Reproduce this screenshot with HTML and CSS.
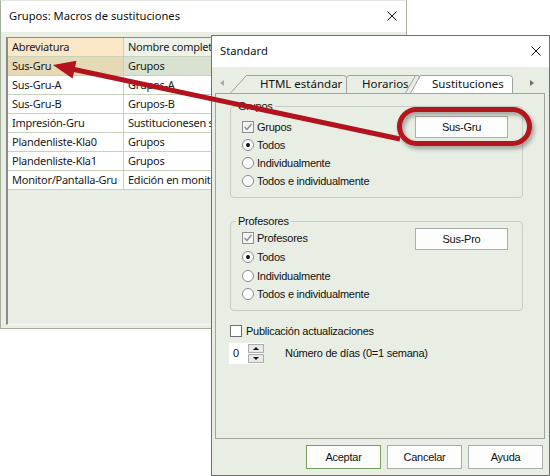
FILE: index.html
```html
<!DOCTYPE html>
<html lang="es">
<head>
<meta charset="utf-8">
<title>Grupos: Macros de sustituciones</title>
<link rel="stylesheet" href="styles.css">
</head>
<body>
<div class="desk">
  <section class="win main">
    <header class="titlebar">
      <span class="title">Grupos: Macros de sustituciones</span>
      <svg class="close" width="10" height="10" viewBox="0 0 10 10"><path d="M0.5 0.5 L9.5 9.5 M9.5 0.5 L0.5 9.5"/></svg>
    </header>
    <div class="main-body">
      <div class="grid">
        <div class="row head"><div class="cell c1">Abreviatura</div><div class="cell c2">Nombre completo</div></div>
        <div class="row sel"><div class="cell c1">Sus-Gru</div><div class="cell c2">Grupos</div></div>
        <div class="row"><div class="cell c1">Sus-Gru-A</div><div class="cell c2">Grupos-A</div></div>
        <div class="row"><div class="cell c1">Sus-Gru-B</div><div class="cell c2">Grupos-B</div></div>
        <div class="row"><div class="cell c1">Impresión-Gru</div><div class="cell c2">Sustitucionesen su grupo</div></div>
        <div class="row"><div class="cell c1">Plandenliste-Kla0</div><div class="cell c2">Grupos</div></div>
        <div class="row"><div class="cell c1">Plandenliste-Kla1</div><div class="cell c2">Grupos</div></div>
        <div class="row"><div class="cell c1">Monitor/Pantalla-Gru</div><div class="cell c2">Edición en monitor</div></div>
      </div>
    </div>
  </section>

  <section class="win dialog">
    <header class="titlebar">
      <span class="title">Standard</span>
      <svg class="close" width="10" height="10" viewBox="0 0 10 10"><path d="M0.5 0.5 L9.5 9.5 M9.5 0.5 L0.5 9.5"/></svg>
    </header>
    <div class="dlg-body">
      <svg class="tabs" width="330" height="26" viewBox="0 0 330 26">
        <polygon points="9,13 9,19 5,16" fill="#a9a9a9"/>
        <polygon points="315,13 315,19 319,16" fill="#6d6d6d"/>
        <path class="tab" d="M15.5,26 L31.5,8.5 H128.5 Q131.5,8.5 131.5,11.5 V26"/>
        <path class="tab" d="M131.5,26 V11.5 Q131.5,8.5 134.5,8.5 H204 V26"/>
        <path class="tab" d="M190.5,26 L200.5,8.5"/>
        <path class="tab active" d="M195.5,26 L205.5,8.5 H294.5 Q297.5,8.5 297.5,11.5 V26"/>
        <text x="45" y="21">HTML estándar</text>
        <text x="147" y="21">Horarios</text>
        <text x="217" y="21">Sustituciones</text>
      </svg>
      <div class="panel">
        <div class="group g1">
          <div class="gtitle">Grupos</div>
          <div class="group-body">
            <div class="opts">
              <div class="opt"><span class="chk on"><svg width="10" height="10" viewBox="0 0 10 10"><path d="M1.5 5 L4 7.5 L8.5 2"/></svg></span><span>Grupos</span></div>
              <div class="opt"><span class="radio on"></span><span>Todos</span></div>
              <div class="opt"><span class="radio"></span><span>Individualmente</span></div>
              <div class="opt"><span class="radio"></span><span>Todos e individualmente</span></div>
            </div>
            <div class="btn macro">Sus-Gru</div>
          </div>
        </div>
        <div class="group g2">
          <div class="gtitle">Profesores</div>
          <div class="group-body">
            <div class="opts">
              <div class="opt"><span class="chk on"><svg width="10" height="10" viewBox="0 0 10 10"><path d="M1.5 5 L4 7.5 L8.5 2"/></svg></span><span>Profesores</span></div>
              <div class="opt"><span class="radio on"></span><span>Todos</span></div>
              <div class="opt"><span class="radio"></span><span>Individualmente</span></div>
              <div class="opt"><span class="radio"></span><span>Todos e individualmente</span></div>
            </div>
            <div class="btn macro">Sus-Pro</div>
          </div>
        </div>
        <div class="opt pub"><span class="chk plain"></span><span>Publicación actualizaciones</span></div>
        <div class="spin-row">
          <div class="spin-box">
            <span class="spin-val">0</span>
            <span class="spin-btns"><span class="sb up"></span><span class="sb down"></span></span>
          </div>
          <span class="spin-label">Número de días (0=1 semana)</span>
        </div>
      </div>
      <div class="dlg-buttons">
        <div class="btn def">Aceptar</div>
        <div class="btn">Cancelar</div>
        <div class="btn">Ayuda</div>
      </div>
    </div>
  </section>

  <svg class="annot" width="550" height="476" viewBox="0 0 550 476">
    <defs>
      <filter id="sh" x="-20%" y="-40%" width="140%" height="200%">
        <feDropShadow dx="2" dy="3" stdDeviation="2" flood-color="#000" flood-opacity="0.35"/>
      </filter>
    </defs>
    <rect x="399.5" y="109.5" width="130" height="34" rx="17" fill="none" stroke="#b3131c" stroke-width="5" filter="url(#sh)"/>
    <line x1="400" y1="139" x2="73" y2="69.3" stroke="#b3131c" stroke-width="5"/>
    <polygon points="53,65 76.4,60.8 72.6,78.4" fill="#b3131c"/>
  </svg>
</div>
</body>
</html>
```

FILE: styles.css
```css
body {
  margin: 0;
  background: #fff;
  font-family: "Noto Sans", "Liberation Sans", sans-serif;
  color: #111;
}
.desk {
  position: relative;
  width: 550px;
  height: 476px;
  overflow: hidden;
}
.win {
  position: absolute;
  box-sizing: border-box;
  display: flex;
  flex-direction: column;
  background: #e9eee4;
}
.main {
  left: 0;
  top: 0;
  width: 407px;
  height: 329px;
  border: 1px solid #a5af9d;
  border-top-color: #e3e6df;
}
.dialog {
  left: 211px;
  top: 35px;
  width: 339px;
  height: 441px;
  border: 1px solid #6f6f6f;
}
.titlebar {
  flex: none;
  height: 31px;
  background: #fff;
  display: flex;
  align-items: center;
  justify-content: space-between;
  font-size: 11.2px;
}
.main .titlebar { padding: 0 9px 0 8px; }
.dialog .titlebar { padding: 0 8px 0 8px; }
.title { line-height: 16px; margin-top: -2px; }
.close path { stroke: #111; stroke-width: 1; fill: none; }
.close { margin-top: -1px; }

/* grid */
.main-body {
  flex: 1;
  display: flex;
  padding: 5px 5px 3px 5px;
}
.grid {
  flex: 1;
  box-sizing: border-box;
  border-left: 2px solid #8b8b8b;
  border-top: 1px solid #8b8b8b;
  border-right: 1px solid #f7f7f7;
  border-bottom: 1px solid #f7f7f7;
  background: #e9eee4;
  font-size: 11px;
  letter-spacing: -0.25px;
  color: #1a1a22;
}
.row {
  display: flex;
  height: 19px;
  box-sizing: border-box;
  border-bottom: 1px solid #c6d2bb;
  background: #fff;
}
.cell {
  line-height: 18px;
  padding-left: 4px;
  white-space: nowrap;
  overflow: hidden;
  box-sizing: border-box;
}
.c1 { width: 116px; flex: none; border-right: 1px solid #c6d2bb; }
.c2 { flex: 1; }
.head .c1 { background: #fce7c6; }
.head .c2 { background: #eef2e9; }
.sel .c1 { background: #e6d9b5; }
.sel .c2 { background: #d9e2d1; }

/* dialog body */
.dlg-body {
  flex: 1;
  display: flex;
  flex-direction: column;
  padding: 0 4px 6px 3px;
  font-family: "Liberation Sans", Arial, sans-serif;
  font-size: 11px;
  letter-spacing: -0.25px;
}
.tabs { display: block; flex: none; }
.tabs .tab { fill: #e9eee4; stroke: #a0a0a0; stroke-width: 1; }
.tabs .tab.active { fill: #fff; }
.tabs text {
  font-family: "Noto Sans", sans-serif;
  font-size: 11.5px;
  fill: #111;
  letter-spacing: 0;
}
.panel {
  flex: none;
  height: 346px;
  box-sizing: border-box;
  border: 1px solid #a3a3a3;
  padding: 0 21px 0 14px;
}
.group {
  border: 1px solid #c9cec4;
  border-radius: 4px;
}
.g1 { margin-top: 12px; }
.g2 { margin-top: 23px; }
.gtitle {
  margin: -7px 0 0 5px;
  padding: 0 2px;
  width: max-content;
  height: 13px;
  line-height: 13px;
  background: #e9eee4;
}
.group-body {
  display: flex;
  justify-content: space-between;
  align-items: flex-start;
  padding: 0 14px 7px 11px;
}
.g2 .group-body { padding-bottom: 6px; }
.g1 .opts { margin-top: 5px; }
.g1 .macro { margin-top: 3px; }
.g2 .opts { margin-top: 1px; }
.g2 .opt { height: 18.67px; }
.opt {
  display: flex;
  align-items: center;
  height: 18px;
  gap: 3px;
  white-space: nowrap;
}
.chk {
  width: 12px;
  height: 12px;
  box-sizing: border-box;
  border: 1px solid #8e8e8e;
  background: #f4f4f4;
  display: flex;
  align-items: center;
  justify-content: center;
}
.chk path { fill: none; stroke: #8a8a8a; stroke-width: 1.4; }
.chk.plain { background: #fff; border-color: #6e6e6e; }
.radio {
  width: 12px;
  height: 12px;
  box-sizing: border-box;
  border-radius: 50%;
  border: 1px solid #8a8a8a;
  background: #fff;
  display: flex;
  align-items: center;
  justify-content: center;
}
.radio.on::after {
  content: "";
  width: 4px;
  height: 4px;
  border-radius: 50%;
  background: #111;
}
.btn {
  box-sizing: border-box;
  background: #fdfdfd;
  border: 1px solid #adadad;
  display: flex;
  align-items: center;
  justify-content: center;
  white-space: nowrap;
}
.macro { width: 93px; height: 22px; }
.pub { margin-top: 11px; gap: 4px; }
.spin-row {
  display: flex;
  align-items: center;
  margin-top: 3px;
}
.spin-box {
  display: flex;
  width: 35px;
  height: 21px;
  margin-left: -1px;
  background: #fff;
}
.spin-val {
  width: 15px;
  padding-left: 4px;
  line-height: 21px;
}
.spin-btns {
  display: flex;
  flex-direction: column;
  width: 16px;
  gap: 1px;
  padding: 1px 0;
  box-sizing: border-box;
}
.sb {
  flex: 1;
  box-sizing: border-box;
  background: #e8e8e8;
  border: 1px solid #acacac;
  display: flex;
  align-items: center;
  justify-content: center;
}
.sb::after {
  content: "";
  width: 0;
  height: 0;
  border-left: 3px solid transparent;
  border-right: 3px solid transparent;
}
.sb.up::after { border-bottom: 3px solid #111; }
.sb.down::after { border-top: 3px solid #111; }
.spin-label { margin-left: 21px; }
.dlg-buttons {
  display: flex;
  justify-content: flex-end;
  gap: 6px;
  margin-top: 6px;
  padding-right: 2px;
}
.dlg-buttons .btn { width: 75px; height: 24px; }
.btn.def { border-color: #75a05a; }

.annot {
  position: absolute;
  left: 0;
  top: 0;
  pointer-events: none;
}
```
